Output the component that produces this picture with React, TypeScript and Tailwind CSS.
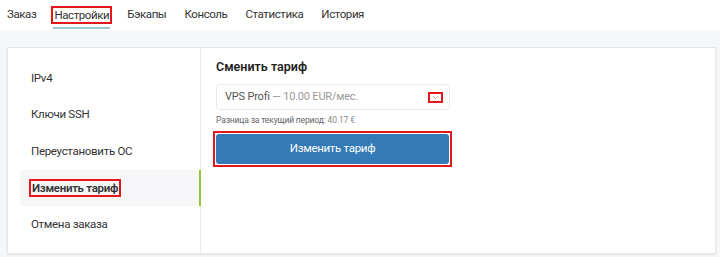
import { ChevronDown } from 'lucide-react';

const tabs = ['Заказ', 'Настройки', 'Бэкапы', 'Консоль', 'Статистика', 'История'];
const menu = ['IPv4', 'Ключи SSH', 'Переустановить ОС', 'Изменить тариф', 'Отмена заказа'];

export default function App() {
  return (
    <div className="w-[720px] h-[257px] bg-[#f6f7f9] text-[#333] font-['Roboto',sans-serif] overflow-hidden">
      {/* Tabs */}
      <div className="h-[30px] bg-white flex items-stretch pl-[7px] gap-[18px] text-[11.5px] tracking-[-0.4px]">
        {tabs.map((t) => (
          <div key={t} className="relative flex items-center pb-[1px]">
            {t === 'Настройки' ? (
              <>
                <span className="-mx-[3px] border-2 border-[#e3161b] px-[1px] leading-[14px]">{t}</span>
                <span className="absolute -left-[1px] -right-[1px] bottom-[1px] h-[2px] bg-[#9cc7d6]" />
              </>
            ) : (
              <span>{t}</span>
            )}
          </div>
        ))}
      </div>

      {/* Card */}
      <div className="mt-[17px] ml-[7px] w-[709px] h-[207px] bg-white border border-[#e6e7ea] shadow-[0_1px_2px_rgba(0,0,0,0.08)] flex">
        {/* Sidebar */}
        <div className="w-[193px] pl-[12px] pt-[12px] border-r border-[#ececef] flex flex-col text-[11.5px] tracking-[-0.3px]">
          {menu.map((m) => {
            const active = m === 'Изменить тариф';
            return (
              <div
                key={m}
                className={
                  active
                    ? 'h-[36.5px] flex items-center pl-[9px] bg-[#f6f6f8] rounded-l-[4px] border-r-2 border-[#8dc63f] -mr-px font-semibold'
                    : 'h-[36.5px] flex items-center pl-[11px]'
                }
              >
                {active ? (
                  <span className="border-2 border-[#e3161b] px-[1px] leading-[14px]">{m}</span>
                ) : (
                  m
                )}
              </div>
            );
          })}
        </div>

        {/* Content */}
        <div className="pl-[15px] pt-[10px] w-[250px]">
          <div className="text-[12.5px] font-semibold leading-[18px] text-[#222]">Сменить тариф</div>
          <div className="mt-[8px] h-[26px] w-[234px] border border-[#e8e9ec] rounded-[4px] flex items-center justify-between pl-[8px] pr-[6px] text-[11px] tracking-[-0.2px]">
            <span>
              <span className="text-[#555]">VPS Profi</span>
              <span className="text-[#999]"> — 10.00 EUR/мес.</span>
            </span>
            <span className="w-[15px] h-[11px] border-2 border-[#e3161b] flex items-center justify-center">
              <ChevronDown className="w-[9px] h-[9px] text-[#888]" strokeWidth={2} />
            </span>
          </div>
          <div className="mt-[4px] text-[8.5px] tracking-[-0.15px] text-[#666] leading-[12px]">
            Разница за текущий период: <span className="text-[#888]">40.17 €</span>
          </div>
          <div className="mt-[5px] -ml-[3px] w-[239px] h-[36px] border-2 border-[#e3161b] p-px">
            <button className="w-full h-full bg-[#337ab7] rounded-[3px] text-white text-[11.5px] tracking-[-0.3px]">
              Изменить тариф
            </button>
          </div>
        </div>
      </div>
    </div>
  );
}
